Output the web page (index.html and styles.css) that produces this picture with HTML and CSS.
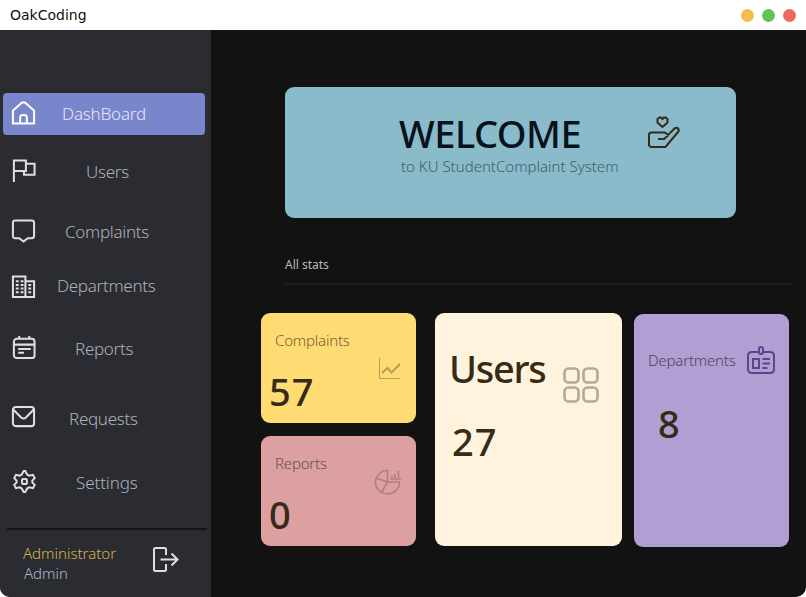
FILE: index.html
```
<!DOCTYPE html>
<html lang="en">
<head>
<meta charset="utf-8">
<title>OakCoding</title>
<link rel="stylesheet" href="styles.css">
</head>
<body>
<div class="window">
  <header class="titlebar">
    <span class="app-name">OakCoding</span>
    <div class="controls"><i class="dot amber"></i><i class="dot green"></i><i class="dot red"></i></div>
  </header>
  <div class="body">
    <aside class="sidebar">
      <nav class="nav">
        <a class="item active"><svg class="ico" viewBox="0 0 26 26"><path d="M2 24.500V11L11.500 2.500h3L24 11v13.500ZM9.500 24v-6q0-2.500 3.500-2.500t3.500 2.500V24"/></svg><span class="label dashboard">DashBoard</span></a>
        <a class="item users"><svg class="ico" viewBox="0 0 26 26"><path d="M3 25V2.500h12.500v11H3M15.500 6h9v11.500h-11v-4"/></svg><span class="label">Users</span></a>
        <a class="item complaints"><svg class="ico" viewBox="0 0 26 26"><path d="M4.500 2.500h17q2.500 0 2.500 2.500v13.500q0 2.500-2.500 2.500h-4L13 24.500 8.500 21h-4Q2 21 2 18.500V5q0-2.500 2.500-2.500Z"/></svg><span class="label">Complaints</span></a>
        <a class="item departments"><svg class="ico" viewBox="0 0 26 26"><path d="M2 24V2.500h13V24ZM15 7.500h9V24h-9"/><path class="dash" d="M5 7.500h8M5 11.500h8M5 15h8M5 19h8M18 11.500h3M18 15h3M18 19h3"/></svg><span class="label">Departments</span></a>
        <a class="item reports"><svg class="ico" viewBox="0 0 26 26"><rect x="3" y="4" width="21.500" height="20" rx="3"/><path d="M3 10h21.500M8.500 1v3M19 1v3M7.500 14.500h13M7.500 18.500h6"/></svg><span class="label">Reports</span></a>
        <a class="item requests"><svg class="ico" viewBox="0 0 26 26"><rect x="2" y="3" width="22" height="20" rx="3"/><path d="m2.500 6 8 8q2.500 2 5 0l8-8"/></svg><span class="label">Requests</span></a>
        <a class="item settings"><svg class="ico" viewBox="0 0 26 26"><path d="M13.200 2h1.600l2.200 4 2 1 3.800-.9 1.800 3.400-2.400 2.500v2l2.400 2.500-1.800 3.400L19 19l-2 1-2.200 4h-1.600L11 20l-2-1-3.800.9-1.800-3.400L5.800 14v-2L3.400 9.500l1.800-3.400L9 7l2-1Z"/><rect x="11.500" y="10.500" width="5" height="5" rx="1"/></svg><span class="label">Settings</span></a>
      </nav>
      <footer class="account">
        <div class="who"><div class="name">Administrator</div><div class="role">Admin</div></div>
        <svg class="logout" viewBox="0 0 28 28"><path d="M14 9V3.500q0-1.500-1.500-1.500h-9Q2 2 2 3.500v20Q2 25 3.500 25h9q1.500 0 1.500-1.500V18M8.500 13.500h17M19.500 7.500l6 6-6 6"/></svg>
      </footer>
    </aside>
    <main class="main">
      <section class="banner">
        <div class="greeting"><h1>WELCOME</h1><p>to KU StudentComplaint System</p></div>
        <svg class="care" viewBox="0 0 34 34"><path d="M15.500 12 10.500 7.500V4L12.500 2.500H14L15.500 4 17 2.500h1.500l2 1.500v3.500ZM3.500 17.500H18l3 2.500 6.500-6.500q2-1.500 4 .5 1 1.500-.5 3L18.500 32H4L2 30.500V19ZM11 24h6l4-3.500"/></svg>
      </section>
      <h2 class="section-title">All stats</h2>
      <section class="stats">
        <div class="stack">
          <article class="card yellow">
            <h3>Complaints</h3><strong>57</strong>
            <svg class="chart" viewBox="0 0 24 24"><path class="axis" d="M1.500 1v20.500H22"/><path d="m4 16 5.500-5 4 4.500L22 7"/></svg>
          </article>
          <article class="card pink">
            <h3>Reports</h3><strong>0</strong>
            <svg class="pie" viewBox="0 0 28 26"><path d="M14.500 1.500A12 11.700 0 1 0 26.500 13H14.500ZM14.500 13 3 9M14.500 13 8.500 23.500M17 10h11M19 9V6.500M22 9V4.500M25.500 9V2"/></svg>
          </article>
        </div>
        <article class="card cream">
          <h3 class="big">Users</h3>
          <svg class="tiles" viewBox="0 0 36 36"><rect x="1.500" y="1.500" width="14" height="14" rx="4"/><rect x="20.500" y="1.500" width="14" height="14" rx="4"/><rect x="1.500" y="20.500" width="14" height="14" rx="4"/><rect x="20.500" y="20.500" width="14" height="14" rx="4"/></svg>
          <strong>27</strong>
        </article>
        <article class="card purple">
          <h3>Departments</h3>
          <svg class="badge" viewBox="0 0 28 28"><path d="M12 6H5Q1 6 1 10v13q0 4 4 4h18q4 0 4-4V10q0-4-4-4h-7"/><rect x="12" y="1" width="4" height="7" rx="2"/><path d="M6 13h6v9H6ZM15.500 13H23M15.500 17.500H23M15.500 22H20.500"/></svg>
          <strong>8</strong>
        </article>
      </section>
    </main>
  </div>
</div>
</body>
</html>
```
FILE: styles.css
```
* { box-sizing: border-box; }
body { margin: 0; background: #fff; font-family: "Noto Sans", "Open Sans", sans-serif; font-weight: 300; }
h1, h2, h3, p { margin: 0; font-weight: inherit; }
svg { fill: none; stroke: currentColor; stroke-width: 2; flex: none; display: block; }

.window { width: 806px; height: 597px; display: flex; flex-direction: column; }
.titlebar { height: 30px; display: flex; align-items: center; justify-content: space-between; padding: 0 10px; }
.app-name { font: 400 14px/30px "DejaVu Sans", sans-serif; color: #111; }
.controls { display: flex; gap: 8px; }
.dot { width: 13px; height: 13px; border-radius: 50%; }
.amber { background: #f5bd4f; }
.green { background: #61c455; }
.red { background: #ed6a5e; }

.body { flex: 1; display: flex; overflow: hidden; border-radius: 0 0 10px 10px; background: #121212; }

.sidebar { width: 211px; background: #2b2c31; color: #dedfde; padding-top: 63px; }
.nav { display: flex; flex-direction: column; height: 435px; }
.item { height: 42px; flex: none; width: 202px; margin-left: 3px; display: flex; align-items: center; border-radius: 4px; padding-left: 8px; font-size: 17px; letter-spacing: -0.3px; }
.ico { width: 25px; height: 25px; margin: -3px 1px 0 0; stroke-width: 2.1; }
.label { color: #adb1ba; line-height: 24px; white-space: nowrap; }
.active { background: #7a86cc; color: #fff; }
.active .ico { margin-top: -3px; }
.active .label { color: #e6e7f7; margin-left: 25px; letter-spacing: -0.2px; }
.users { margin-top: 16px; }
.users .label { margin-left: 49px; }
.complaints { margin-top: 18px; }
.complaints .label { margin-left: 28px; }
.departments { margin-top: 12px; }
.departments .ico { margin-top: 1px; }
.departments .label { margin-left: 20px; }
.reports { margin-top: 21px; }
.reports .label { margin-left: 38px; }
.requests { margin-top: 28px; }
.requests .ico { margin-top: -5px; }
.requests .label { margin-left: 32px; }
.settings { margin-top: 22px; }
.settings .label { margin-left: 39px; letter-spacing: -0.1px; }
.dash { stroke-dasharray: 3 2; }

.account { margin: 0 4px 0 7px; border-top: 2px solid #15161b; height: 69px; display: flex; padding: 13px 0 0 16px; }
.who { width: 129px; font-size: 15px; line-height: 20px; }
.name { color: #d9b24d; }
.role { color: #abb5cf; margin-left: 1px; }
.logout { width: 28px; height: 28px; margin-top: 3px; }

.main { flex: 1; padding: 57px 14px 0 50px; }
.banner { width: 451px; height: 131px; margin-left: 24px; border-radius: 9px; background: #8abbcb; display: flex; padding: 23px 0 0 114px; }
.greeting { width: 248px; }
.greeting h1 { font-size: 38px; line-height: 46px; font-weight: 500; letter-spacing: -0.5px; color: #07121c; }
.greeting p { font-size: 15px; line-height: 20px; margin-left: 2px; color: #435d67; white-space: nowrap; }
.care { width: 34px; height: 34px; margin-top: 5px; color: #352b17; }
.section-title { margin-left: 24px; padding-top: 37px; height: 67px; border-bottom: 2px solid #1e1e23; font-size: 12px; line-height: 20px; font-weight: 400; color: #b7babf; }
.stats { display: flex; margin-top: 28px; }
.stack { display: flex; flex-direction: column; gap: 13px; }
.card { border-radius: 9px; display: grid; align-content: start; }
.card h3 { font-size: 15px; line-height: 20px; letter-spacing: -0.2px; }
.card strong { font-size: 38px; line-height: 46px; font-weight: 500; color: #352b17; }

.yellow, .pink { width: 155px; height: 110px; padding: 17px 14px 0 8px; grid-template-columns: 1fr auto; }
.yellow h3, .pink h3 { grid-column: 1 / 3; margin-left: 6px; }
.yellow strong, .pink strong { margin-top: 18px; }
.yellow { background: #ffdc73; }
.yellow h3 { color: #746237; }
.yellow strong { letter-spacing: 1px; }
.chart { width: 24px; height: 24px; margin-top: 7px; color: #b69d54; }
.axis { stroke-width: 1; }
.pink { background: #dba09f; }
.pink h3 { color: #6a4d52; }
.pie { width: 28px; height: 26px; margin: -4px 1px 0 0; color: #b27f80; stroke-width: 1.6; }

.cream { width: 187px; height: 233px; margin-left: 19px; background: #fff3de; padding: 32px 22px 0 14px; grid-template-columns: 1fr auto; }
.cream .big { font-size: 38px; line-height: 46px; font-weight: 500; letter-spacing: -1.3px; color: #352b17; }
.tiles { width: 36px; height: 36px; margin: 22px 1px 0 -1px; color: #b4aa9b; stroke-width: 2.7; }
.cream strong { margin: 15px 0 0 3px; letter-spacing: 1px; }
.purple { width: 155px; height: 233px; margin: 1px 0 0 12px; background: #b09fd3; padding: 32px 14px 0; grid-template-columns: 1fr auto; }
.purple h3 { margin-top: 4px; color: #4e4265; }
.badge { width: 28px; height: 28px; color: #5c458b; }
.purple strong { margin: 26px 0 0 10px; }
```
